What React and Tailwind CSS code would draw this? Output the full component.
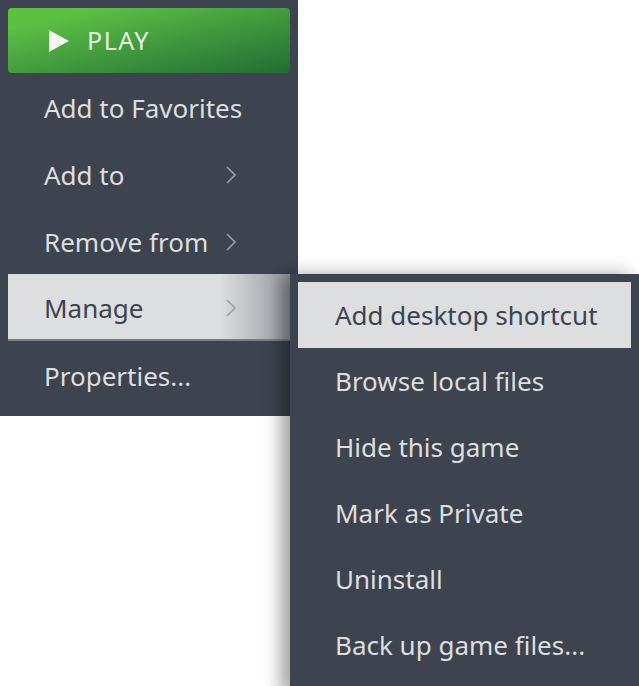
import React from 'react';

const Chevron = ({ className = '' }) => (
  <svg width="12" height="20" viewBox="0 0 12 20" className={className}>
    <path d="M2 2 L10 10 L2 18" fill="none" stroke="currentColor" strokeWidth="1.6" />
  </svg>
);

const MenuItem = ({ label, arrow, active }) => (
  <div
    className={`flex items-center h-[67px] pt-[3px] pl-[36px] pr-[8px] text-[26px] ${
      active
        ? 'bg-[#dcdedf] text-[#3d4450] border-b-2 border-[#7a7f87] bg-gradient-to-r from-[#dcdedf] from-75% to-[#9a9da2]'
        : 'text-[#dcdedf]'
    }`}
  >
    <span className="flex-1">{label}</span>
    {arrow && <Chevron className={`mr-[45px] ${active ? 'text-[#9a9ea5]' : 'text-[#9aa0a8]'}`} />}
  </div>
);

const subItems = [
  'Add desktop shortcut',
  'Browse local files',
  'Hide this game',
  'Mark as Private',
  'Uninstall',
  'Back up game files...',
];

export default function App() {
  return (
    <div className="relative w-[639px] h-[686px] bg-white overflow-hidden font-['Noto_Sans',sans-serif]">
      <div className="w-[298px] bg-[#3d4450] px-[8px] pt-[8px] pb-[8px]">
        <div className="h-[65px] rounded-[4px] bg-gradient-to-br from-[#5cc143] from-15% to-[#226c35] flex items-center pl-[41px]">
          <svg width="20" height="22" viewBox="0 0 20 22" className="text-[#f4f8f2]">
            <path d="M0 0 L20 11 L0 22 Z" fill="currentColor" />
          </svg>
          <span className="ml-[18px] text-[25px] tracking-[1.5px] text-[#e6f2e2]">PLAY</span>
        </div>
        <MenuItem label="Add to Favorites" />
        <MenuItem label="Add to" arrow />
        <MenuItem label="Remove from" arrow />
        <MenuItem label="Manage" arrow active />
        <MenuItem label="Properties..." />
      </div>

      <div className="absolute left-[290px] top-[274px] w-[349px] h-[420px] bg-[#3d4450] pt-[8px] px-[8px] shadow-[-10px_0_16px_rgba(0,0,0,0.35)]">
        {subItems.map((s, i) => (
          <div
            key={s}
            className={`h-[66px] flex items-center pl-[37px] text-[26px] ${
              i === 0 ? 'bg-[#dcdedf] text-[#3d4450]' : 'text-[#dcdedf]'
            }`}
          >
            {s}
          </div>
        ))}
      </div>
    </div>
  );
}
